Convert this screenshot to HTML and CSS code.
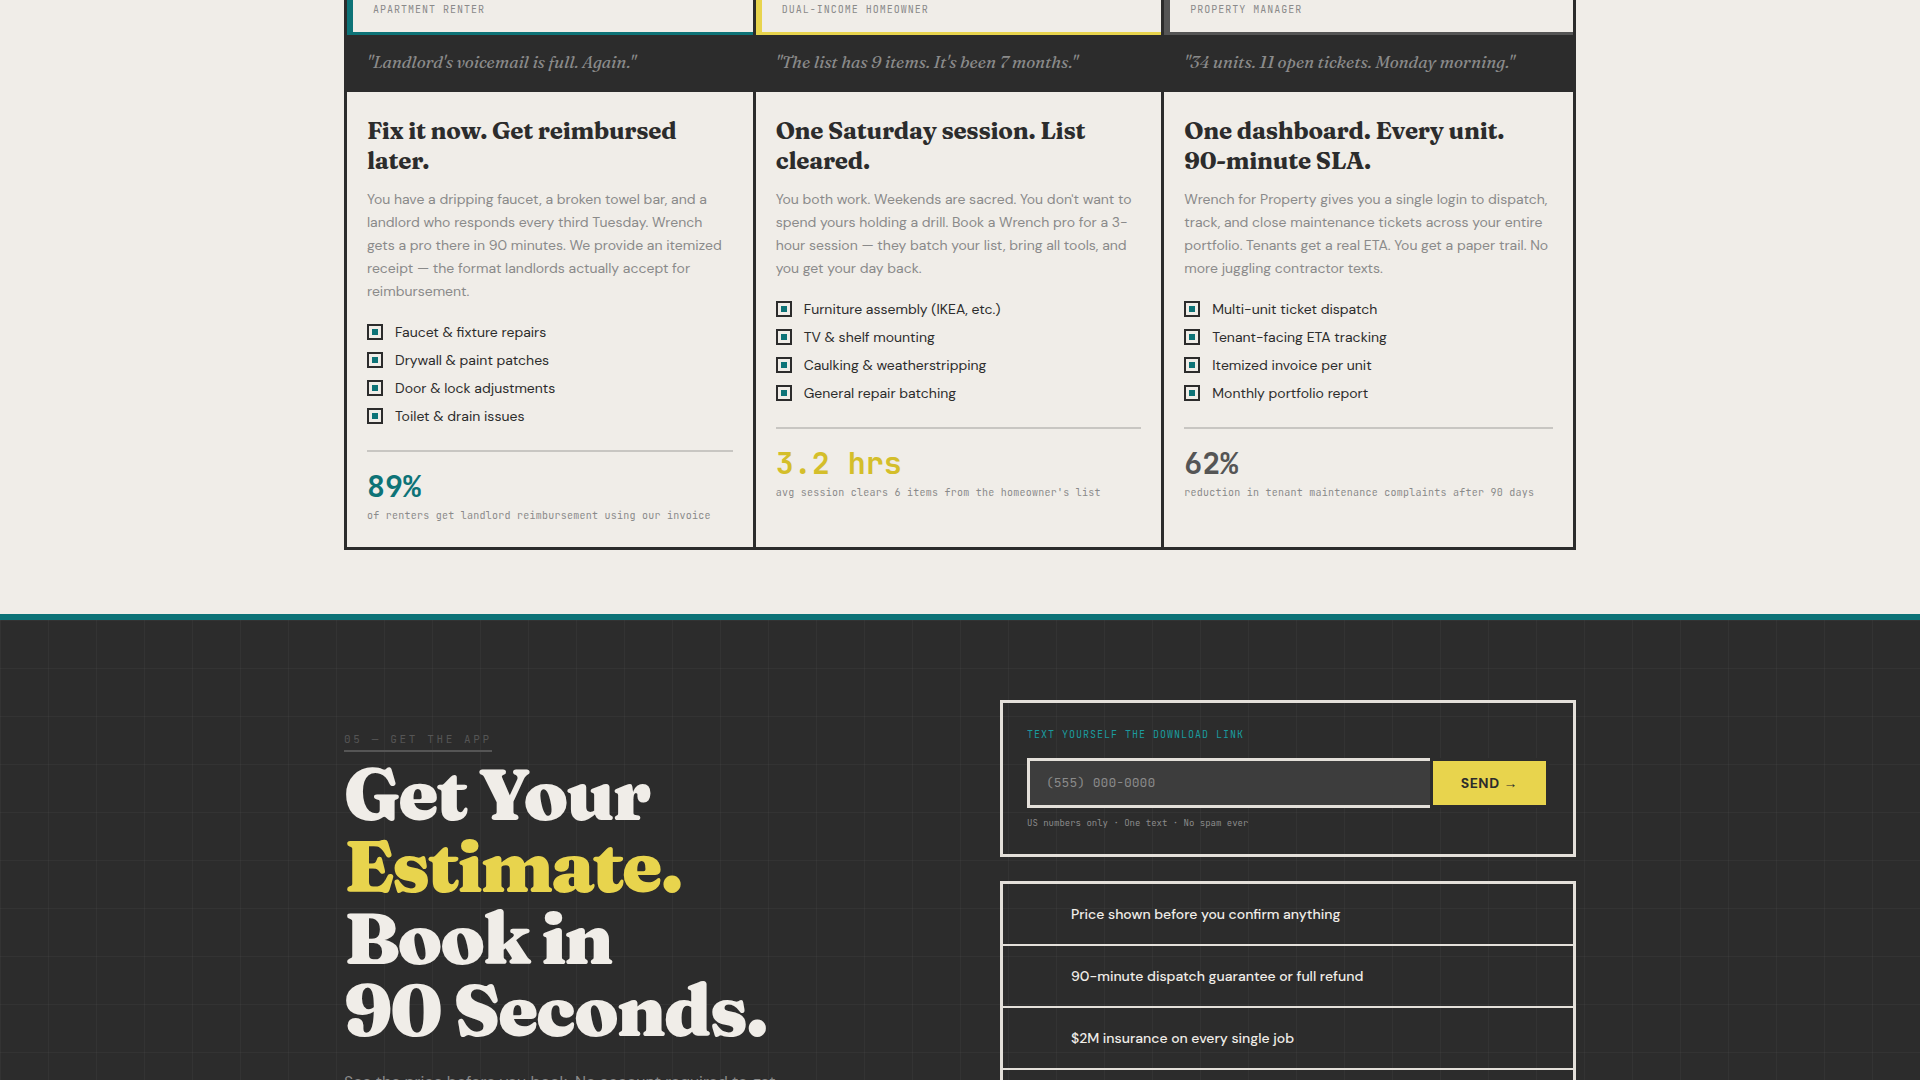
FILE: index.html
```
<!DOCTYPE html>
<html lang="en">
  <head>
    <title>Wrench</title>
    <meta charset="utf-8">
    <meta name="viewport" content="width=device-width, initial-scale=1.0">
    <link rel="stylesheet" href="styles.css">
  </head>
  <body>
    <section class="personas">
      <div class="container">
        <div class="persona-grid">
          <article class="persona persona--renter">
            <header class="persona-head">Apartment Renter</header>
            <blockquote class="persona-quote">"Landlord's voicemail is full. Again."</blockquote>
            <div class="persona-body">
              <h3>Fix it now. Get reimbursed later.</h3>
              <p>You have a dripping faucet, a broken towel bar, and a landlord who responds every third Tuesday. Wrench gets a pro there in 90 minutes. We provide an itemized receipt — the format landlords actually accept for reimbursement.</p>
              <ul class="features">
                <li>Faucet &amp; fixture repairs</li>
                <li>Drywall &amp; paint patches</li>
                <li>Door &amp; lock adjustments</li>
                <li>Toilet &amp; drain issues</li>
              </ul>
              <div class="stat">
                <div class="stat-number">89%</div>
                <div class="stat-label">of renters get landlord reimbursement using our invoice</div>
              </div>
            </div>
          </article>
          <article class="persona persona--owner">
            <header class="persona-head">Dual-Income Homeowner</header>
            <blockquote class="persona-quote">"The list has 9 items. It's been 7 months."</blockquote>
            <div class="persona-body">
              <h3>One Saturday session. List cleared.</h3>
              <p>You both work. Weekends are sacred. You don't want to spend yours holding a drill. Book a Wrench pro for a 3-hour session — they batch your list, bring all tools, and you get your day back.</p>
              <ul class="features">
                <li>Furniture assembly (IKEA, etc.)</li>
                <li>TV &amp; shelf mounting</li>
                <li>Caulking &amp; weatherstripping</li>
                <li>General repair batching</li>
              </ul>
              <div class="stat">
                <div class="stat-number">3.2 hrs</div>
                <div class="stat-label">avg session clears 6 items from the homeowner's list</div>
              </div>
            </div>
          </article>
          <article class="persona persona--manager">
            <header class="persona-head">Property Manager</header>
            <blockquote class="persona-quote">"34 units. 11 open tickets. Monday morning."</blockquote>
            <div class="persona-body">
              <h3>One dashboard. Every unit.<br>90-minute SLA.</h3>
              <p>Wrench for Property gives you a single login to dispatch, track, and close maintenance tickets across your entire portfolio. Tenants get a real ETA. You get a paper trail. No more juggling contractor texts.</p>
              <ul class="features">
                <li>Multi-unit ticket dispatch</li>
                <li>Tenant-facing ETA tracking</li>
                <li>Itemized invoice per unit</li>
                <li>Monthly portfolio report</li>
              </ul>
              <div class="stat">
                <div class="stat-number">62%</div>
                <div class="stat-label">reduction in tenant maintenance complaints after 90 days</div>
              </div>
            </div>
          </article>
        </div>
      </div>
    </section>

    <section class="download">
      <div class="container download-grid">
        <div class="pitch">
          <span class="section-label">05 — Get the App</span>
          <h2>Get Your<br><em>Estimate.</em><br>Book in<br>90 Seconds.</h2>
          <p>See the price before you book. No account required to get</p>
        </div>
        <div class="actions">
          <form class="sms">
            <label for="phone">Text yourself the download link</label>
            <div class="sms-row">
              <input type="tel" id="phone" placeholder="(555) 000-0000">
              <button type="button">SEND <span class="arrow">→</span></button>
            </div>
            <p class="sms-note">US numbers only · One text · No spam ever</p>
          </form>
          <ul class="promises">
            <li>Price shown before you confirm anything</li>
            <li>90-minute dispatch guarantee or full refund</li>
            <li>$2M insurance on every single job</li>
            <li></li>
          </ul>
        </div>
      </div>
    </section>
  </body>
</html>
```
FILE: styles.css
```
:root {
  --ink: #2c2c2c;
  --paper: #f0ede8;
  --line: #e4e0da;
  --teal: #0d7377;
  --teal-light: #1a9a9e;
  --yellow: #e8d44d;
  --steel: #555;
  --muted: #8a8a8a;
  --serif: Fraunces, "Liberation Serif", serif;
  --sans: "DM Sans", "Open Sans", sans-serif;
  --mono: "JetBrains Mono", "DejaVu Sans Mono", monospace;
}
*, *::before {
  box-sizing: border-box;
}
body {
  margin: 0;
  background: var(--paper);
  color: var(--ink);
  font-family: var(--sans);
}
h2, h3, p, ul, blockquote {
  margin: 0;
  padding: 0;
}
ul {
  list-style: none;
}
.container {
  max-width: 1280px;
  margin: 0 auto;
  padding: 0 24px;
}

/* personas */
.personas {
  padding-bottom: 64px;
}
.persona-grid {
  display: grid;
  grid-template-columns: repeat(3, 1fr);
  border: 3px solid var(--ink);
  border-top: 0;
}
.persona {
  display: flex;
  flex-direction: column;
  border-right: 3px solid var(--ink);
}
.persona:last-child {
  border-right: 0;
}
.persona-head {
  padding: 3px 20px 15px;
  border-left: 6px solid var(--accent);
  border-bottom: 3px solid var(--accent);
  color: var(--muted);
  font: 10px/14px var(--mono);
  letter-spacing: 1px;
  text-transform: uppercase;
}
.persona--renter { --accent: var(--teal); --number: var(--teal); }
.persona--owner { --accent: var(--yellow); --number: #d4be2a; }
.persona--manager { --accent: var(--steel); --number: var(--steel); }
.persona-quote {
  padding: 15px 20px 18px;
  background: var(--ink);
  color: var(--muted);
  font: italic 17px/24px var(--serif);
}
.persona-body {
  flex: 1;
  padding: 24px 20px;
}
.persona-body h3 {
  margin-bottom: 12px;
  font: 700 24px/30px var(--serif);
  letter-spacing: -0.01em;
}
.persona-body p {
  margin-bottom: 19px;
  color: var(--muted);
  font-size: 14px;
  line-height: 23px;
}
.features {
  display: grid;
  gap: 8px;
}
.features li {
  display: flex;
  align-items: center;
  gap: 12px;
  font-size: 14px;
  line-height: 20px;
}
.features li::before {
  content: "";
  width: 16px;
  height: 16px;
  border: 2px solid var(--ink);
  background: linear-gradient(var(--teal), var(--teal)) center / 6px 6px no-repeat;
}
.stat {
  margin-top: 24px;
  padding-top: 20px;
  border-top: 2px solid #c8c6c2;
}
.stat-number {
  color: var(--number);
  font: 700 30px/28px var(--mono);
}
.stat-label {
  margin-top: 8px;
  color: var(--muted);
  font: 10px/15px var(--mono);
  letter-spacing: 0.025em;
}

/* download */
.download {
  padding: 80px 0;
  border-top: 6px solid var(--teal);
  background-color: var(--ink);
  background-image:
    linear-gradient(rgba(255, 255, 255, 0.03) 1px, transparent 1px),
    linear-gradient(90deg, rgba(255, 255, 255, 0.03) 1px, transparent 1px);
  background-size: 48px 48px;
  color: var(--paper);
}
.download-grid {
  display: grid;
  grid-template-columns: 1fr 1fr;
  gap: 80px;
}
.pitch {
  padding-top: 27px;
}
.section-label {
  display: inline-block;
  padding-bottom: 4px;
  border-bottom: 2px solid var(--steel);
  color: var(--steel);
  font: 11px/14px var(--mono);
  letter-spacing: 0.24em;
  text-transform: uppercase;
}
.pitch h2 {
  margin-top: 6px;
  font: 900 72px/72px var(--serif);
  letter-spacing: -0.03em;
}
.pitch em {
  color: var(--yellow);
  font-style: normal;
}
.pitch p {
  margin-top: 22px;
  color: var(--muted);
  font-size: 16px;
  line-height: 28px;
}
.actions {
  display: grid;
  gap: 24px;
  align-content: start;
}
.sms {
  padding: 24px;
  border: 3px solid var(--line);
}
.sms label {
  display: block;
  margin-bottom: 16px;
  color: var(--teal-light);
  font: 10px/15px var(--mono);
  letter-spacing: 1px;
  text-transform: uppercase;
}
.sms-row {
  display: flex;
}
.sms-row input {
  flex: 1;
  min-width: 0;
  padding: 14px 16px;
  border: 3px solid var(--line);
  border-right: 0;
  border-radius: 0;
  background: #3d3d3d;
  color: var(--paper);
  font: 13px/16px var(--mono);
}
.sms-row input::placeholder {
  color: var(--muted);
}
.sms-row button {
  padding: 0 28px;
  border: 3px solid var(--ink);
  background: var(--yellow);
  color: var(--ink);
  font: 700 14px/16px var(--sans);
  letter-spacing: 0.04em;
}
.arrow {
  font-family: "Liberation Sans", sans-serif;
}
.sms-note {
  margin-top: 8px;
  color: var(--muted);
  font: 9px/14px var(--mono);
}
.promises {
  border: 3px solid var(--line);
}
.promises li {
  min-height: 60px;
  padding: 20px 24px 20px 68px;
  font-size: 14px;
  font-weight: 500;
  line-height: 20px;
}
.promises li + li {
  border-top: 2px solid var(--line);
}
```
